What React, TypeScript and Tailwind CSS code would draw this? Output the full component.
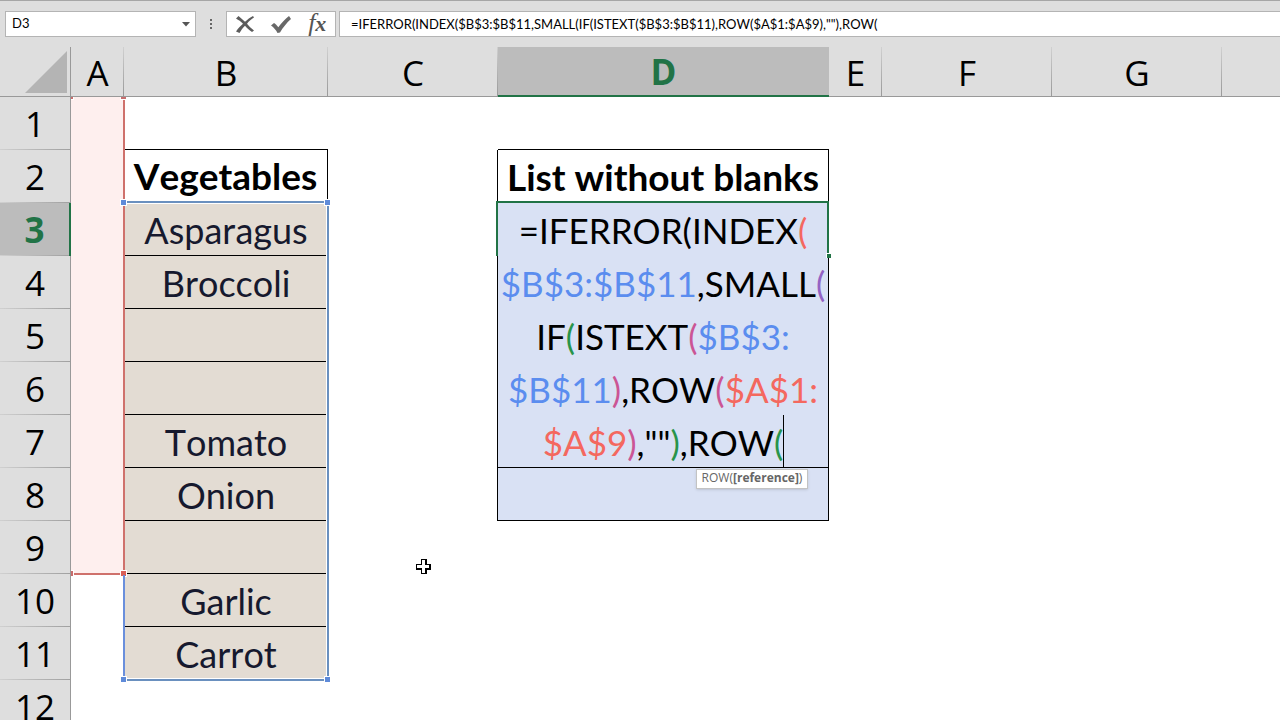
import { useState } from "react"
import clsx from "clsx"

const columns = [
    { id: "A", width: "w-[53px]" },
    { id: "B", width: "w-[204px]" },
    { id: "C", width: "w-[170px]" },
    { id: "D", width: "w-[331px]" },
    { id: "E", width: "w-[53px]" },
    { id: "F", width: "w-[170px]" },
    { id: "G", width: "w-[170px]" },
    { id: "H", width: "" },
]

const rows = [1, 2, 3, 4, 5, 6, 7, 8, 9, 10, 11, 12]

const vegetables: Record<number, string> = {
    3: "Asparagus",
    4: "Broccoli",
    7: "Tomato",
    8: "Onion",
    10: "Garlic",
    11: "Carrot",
}

const BLACK = "text-black"
const BLUE = "text-[#5b8def]"
const RED = "text-[#f4685f]"
const PURPLE = "text-[#9463c4]"
const GREEN = "text-[#28944a]"
const PINK = "text-[#cb5595]"

const formulaLines = [
    [["=IFERROR(INDEX", BLACK], ["(", RED]],
    [["$B$3:$B$11", BLUE], [",SMALL", BLACK], ["(", PURPLE]],
    [["IF", BLACK], ["(", GREEN], ["ISTEXT", BLACK], ["(", PINK], ["$B$3:", BLUE]],
    [["$B$11", BLUE], [")", PINK], [",ROW", BLACK], ["(", PINK], ["$A$1:", RED]],
    [["$A$9", RED], [")", PINK], [",\"\"", BLACK], [")", GREEN], [",ROW", BLACK], ["(", GREEN]],
]

const formula = formulaLines.map((line) => line.map(([text]) => text).join("")).join("")

function FormulaBar() {
    const [name, setName] = useState("D3")
    const [value, setValue] = useState(formula)

    return (
        <div className="flex h-[47px] shrink-0 border-t border-[#a6a6a6] pt-2.5 font-['Lato',sans-serif] text-[13px] text-black">
            <div className="ml-[5px] flex h-[26px] w-[191px] border border-[#b4b4b4] bg-white">
                <input
                    aria-label="Name box"
                    value={name}
                    onChange={(e) => setName(e.target.value)}
                    className="min-w-0 flex-1 px-1.5 outline-none"
                />
                <button type="button" aria-label="Show names" className="flex w-[19px] items-center justify-center">
                    <svg width="8" height="5" viewBox="0 0 8 5" fill="#555">
                        <path d="M0 0h8L4 4.5z" />
                    </svg>
                </button>
            </div>
            <svg className="mx-[11px] mt-[7px]" width="8" height="12" viewBox="0 0 8 12" fill="#666">
                <path d="M3 1h2v2H3zM3 5h2v2H3zM3 9h2v2H3z" />
            </svg>
            <div className="flex h-[26px] w-[110px] items-center justify-around border border-[#b4b4b4] bg-white">
                <button type="button" aria-label="Cancel">
                    <svg width="18" height="17" viewBox="0 0 18 17" fill="#5c5c5c">
                        <path d="M0 2.500 2.500 0C5 2 7 4 9 5.800 11.500 3.500 14 1.500 17 0l1 1.500C15.500 3 13 5 11 7.800 13 10 15 12.500 18 14.500L16 16c-3-2-5-4-7-6.300C6.500 12 5 14.500 3.500 17L0 15.500c2-3 4.500-5.500 7-7.700C5 5.500 2.500 4 0 2.500z" />
                    </svg>
                </button>
                <button type="button" aria-label="Enter">
                    <svg width="20" height="17" viewBox="0 0 20 17" fill="#686868">
                        <path d="M0 9.500 3 7c1.500 1 3 2.500 4.300 4.300C10.500 7 14.500 2.500 18 0L20 3C15.500 7 12 11.500 9 16.500L6.500 17C5 14 2.800 11.500 0 9.500z" />
                    </svg>
                </button>
                <button
                    type="button"
                    aria-label="Insert function"
                    className="pb-0.5 font-['Liberation_Serif',serif] text-[26px] leading-6 text-[#555] italic"
                >
                    f<b className="text-[22px]">x</b>
                </button>
            </div>
            <input
                aria-label="Formula bar"
                value={value}
                onChange={(e) => setValue(e.target.value)}
                className="ml-[3px] h-[26px] min-w-0 flex-1 border-y border-l border-[#b4b4b4] bg-white px-[11px] outline-none [font-kerning:none]"
            />
        </div>
    )
}

function Handle({ className }: { className: string }) {
    return <span className={clsx("absolute size-[7px] border border-white", className)} />
}

function FormulaEditor() {
    return (
        <div className="absolute inset-x-0 top-0 z-20 h-[264px] bg-[#d9e1f4]">
            <div role="textbox" aria-label="Cell D3" className="text-center text-[35px] whitespace-nowrap">
                {formulaLines.map((line, i) => (
                    <div key={i} className="flex h-[53px] items-center justify-center">
                        {line.map(([text, color], j) => (
                            <span key={j} className={color}>{text}</span>
                        ))}
                        {i === formulaLines.length - 1 && <span className="-mr-px h-full w-px bg-black" />}
                    </div>
                ))}
            </div>
            {/* Active cell frame */}
            <div className="pointer-events-none absolute -top-0.5 -right-px -left-0.5 h-[55px] border-2 border-b-0 border-[#217346]" />
            <span className="absolute top-[50px] -right-[3px] size-[5px] border-t border-l border-white bg-[#217346]" />
            <div className="absolute top-[266px] left-[198px] flex h-5 w-[112px] items-center justify-center border border-[#c3c3c3] bg-white pb-0.5 font-['Open_Sans',sans-serif] text-xs text-[#666] shadow-sm">
                ROW(<b>[reference]</b>)
            </div>
        </div>
    )
}

function MouseCursor() {
    return (
        <svg className="absolute top-[38px] left-[88px]" width="16" height="16" viewBox="0 0 16 16">
            <path d="M5 0h6v5h4v6h-4v4H5v-4H0V5h5z" fill="#000" />
            <path d="M6 1h3v5h4v3H9v5H6V9H1V6h5z" fill="#fff" />
        </svg>
    )
}

function Cell({ col, row }: { col: string; row: number }) {
    const inB = col === "B" && row >= 3 && row <= 11
    const inD = col === "D" && row >= 3 && row <= 8
    const underlined =
        (col === "B" && row <= 10) || (col === "D" && (row === 1 || row === 7 || row === 8))

    return (
        <td
            className={clsx(
                "relative p-0 text-center leading-10 whitespace-nowrap",
                inB && "bg-[#e3dcd3] pt-px text-[#16192e]",
                inD && "bg-[#d9e1f4]",
                underlined && "border-b border-black",
                col === "B" && row === 2 && "border-r border-black",
                col === "C" && row >= 2 && row <= 8 && "border-r border-black",
                col === "D" && row >= 2 && row <= 8 && "border-r border-black",
                row === 2 && "text-[37px] font-bold",
            )}
        >
            {col === "A" && row === 1 && (
                <div className="absolute top-0 left-0 z-10 h-[478px] w-[54px] border-r-2 border-b-2 border-[#cf716c] bg-[#feefee] [clip-path:inset(0_-4px_-4px_0)]">
                    <Handle className="-top-1 -left-1 bg-[#c76d6d]" />
                    <Handle className="-top-1 -right-1 bg-[#c76d6d]" />
                    <Handle className="-bottom-1 -left-1 bg-[#c76d6d]" />
                    <Handle className="-right-1 -bottom-1 bg-[#d95f57]" />
                </div>
            )}
            {col === "B" && row === 3 && (
                <>
                    <div className="absolute -top-0.5 -right-px left-px z-10 h-0.5 bg-[#6a90bf] outline-1 outline-white" />
                    <div className="absolute -top-0.5 -right-px z-10 h-[480px] w-0.5 bg-[#6a90bf] outline-1 outline-white" />
                    <div className="absolute top-[476px] -right-px -left-px z-10 h-0.5 bg-[#6a90bf] outline-1 outline-white" />
                    <div className="absolute top-[372px] -left-px z-10 h-[106px] w-0.5 bg-[#6a8fdc]" />
                    <Handle className="-top-1 -left-1 z-20 bg-[#5f8bd9]" />
                    <Handle className="-top-1 -right-[3px] z-20 bg-[#5f8bd9]" />
                    <Handle className="top-[473px] -left-1 z-20 bg-[#5f8bd9]" />
                    <Handle className="top-[473px] -right-[3px] z-20 bg-[#5f8bd9]" />
                </>
            )}
            {col === "D" && row === 3 && <FormulaEditor />}
            {col === "C" && row === 9 && <MouseCursor />}
            {col === "B" && row === 2 && "Vegetables"}
            {col === "D" && row === 2 && "List without blanks"}
            {col === "B" && vegetables[row]}
        </td>
    )
}

export default function App() {
    return (
        <div className="flex h-screen flex-col overflow-hidden bg-[#dedede]">
            <FormulaBar />
            <div className="min-h-0 flex-1 overflow-hidden">
                <table className="w-full table-fixed border-separate border-spacing-0 bg-white font-['Lato',sans-serif] text-4xl text-black [font-kerning:none]">
                    <colgroup>
                        <col className="w-[71px]" />
                        {columns.map((c) => (
                            <col key={c.id} className={c.width} />
                        ))}
                    </colgroup>
                    <thead className="font-['Open_Sans',sans-serif] text-[35px]">
                        <tr className="h-[50px] bg-[#dedede]">
                            <th aria-label="Select all" className="relative border-r border-b border-[#999] p-0">
                                <svg className="absolute right-[3px] bottom-[3px]" width="42" height="42" viewBox="0 0 42 42">
                                    <path d="M42 0v42H0z" fill="#b4b4b4" />
                                </svg>
                            </th>
                            {columns.map((c) => (
                                <th
                                    key={c.id}
                                    scope="col"
                                    className={clsx(
                                        "relative p-0 pt-0.5 leading-10",
                                        c.id === "D"
                                            ? "border-b-2 border-[#217346] bg-[#bcbcbc] font-bold text-[#217346]"
                                            : "border-b border-[#999] font-normal",
                                    )}
                                >
                                    {c.id === "H" ? "" : c.id}
                                    {c.id !== "H" && c.id !== "D" && (
                                        <span className="absolute inset-y-0 right-0 w-px bg-linear-to-b from-[#d0d0d0] to-[#999]" />
                                    )}
                                </th>
                            ))}
                        </tr>
                    </thead>
                    <tbody>
                        {rows.map((row) => (
                            <tr key={row} className="h-[53px]">
                                <th
                                    scope="row"
                                    className={clsx(
                                        "relative p-0 pt-px font-['Open_Sans',sans-serif] text-[35px] leading-10",
                                        row === 3
                                            ? "border-r-2 border-[#217346] bg-[#bcbcbc] font-bold text-[#217346]"
                                            : "border-r border-[#999] bg-[#dedede] font-normal",
                                    )}
                                >
                                    {row}
                                    <span className="absolute inset-x-0 bottom-0 h-px bg-linear-to-r from-[#d0d0d0] to-[#a0a0a0]" />
                                </th>
                                {columns.map((c) => (
                                    <Cell key={c.id} col={c.id} row={row} />
                                ))}
                            </tr>
                        ))}
                    </tbody>
                </table>
            </div>
        </div>
    )
}
